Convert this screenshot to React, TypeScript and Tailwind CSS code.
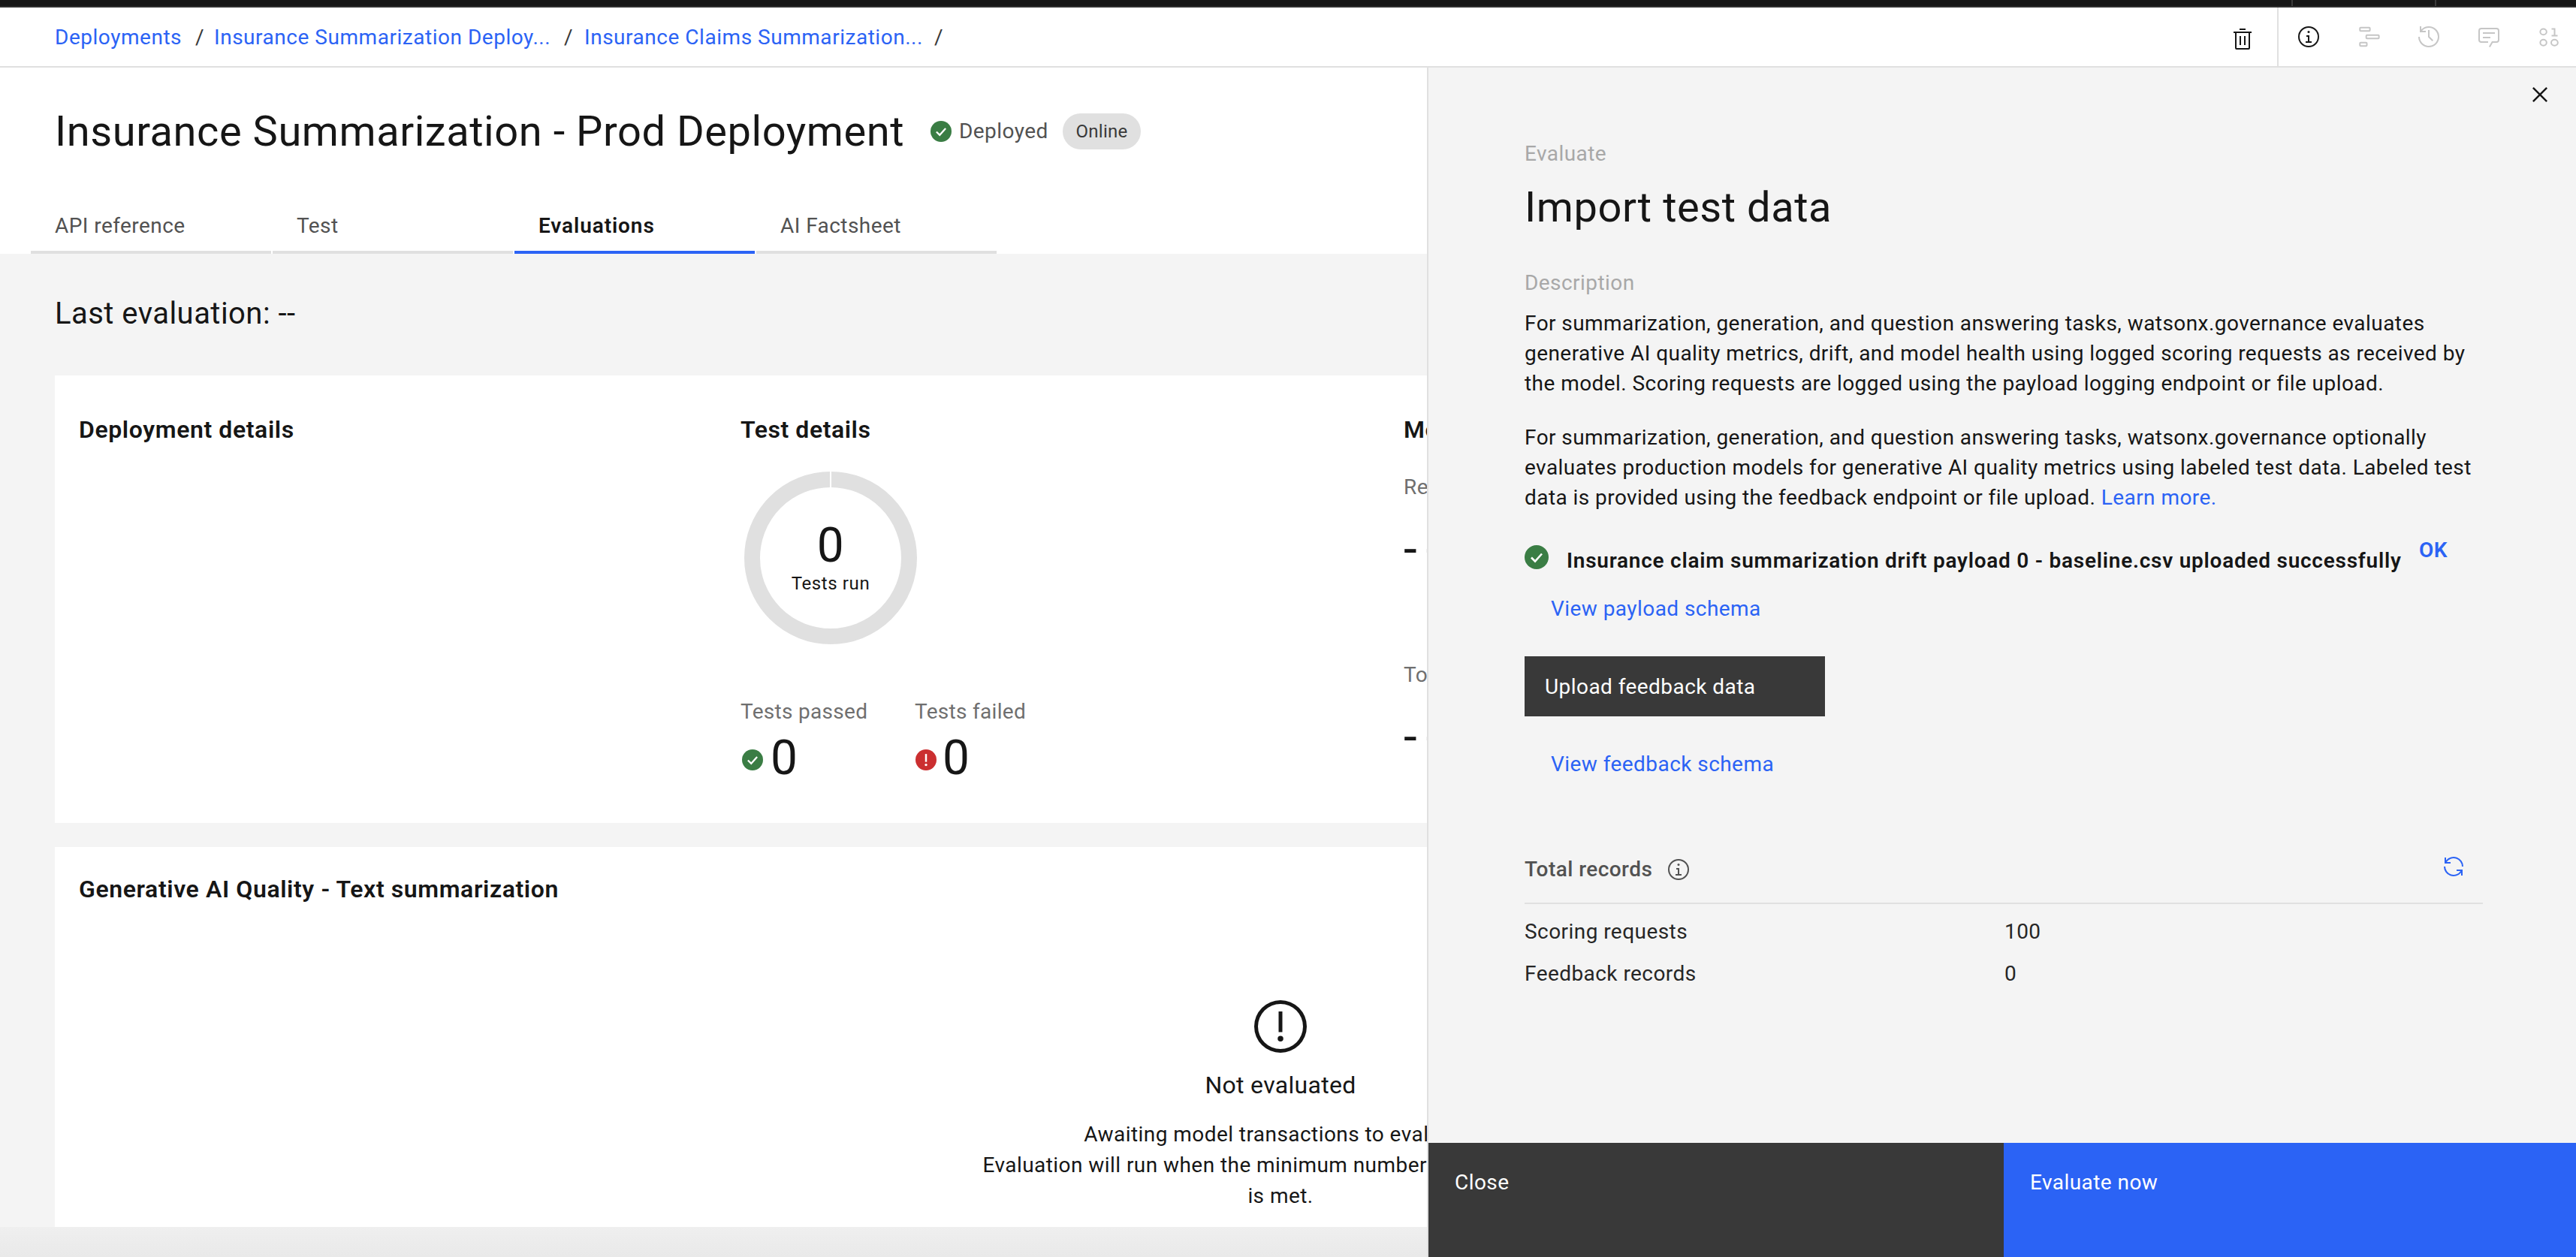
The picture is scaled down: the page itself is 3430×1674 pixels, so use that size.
import React from 'react';

const Icon = ({ className, children, size = 32 }: { className?: string; children: React.ReactNode; size?: number }) => (
  <svg width={size} height={size} viewBox="0 0 32 32" fill="currentColor" className={className}>
    {children}
  </svg>
);

const CheckFilled = ({ size, className }: { size: number; className?: string }) => (
  <svg width={size} height={size} viewBox="0 0 32 32" className={className}>
    <circle cx="16" cy="16" r="16" fill="#3a7d44" />
    <path d="M9 16.5l5 5 9-10" fill="none" stroke="#fff" strokeWidth="2.6" />
  </svg>
);

const WarnFilled = ({ size }: { size: number }) => (
  <svg width={size} height={size} viewBox="0 0 32 32">
    <circle cx="16" cy="16" r="16" fill="#cb2f30" />
    <rect x="14.6" y="7" width="2.8" height="12" fill="#fff" />
    <circle cx="16" cy="23.5" r="1.9" fill="#fff" />
  </svg>
);

const InfoIcon = ({ size = 32, className }: { size?: number; className?: string }) => (
  <Icon size={size} className={className}>
    <path d="M17 22v-8h-4v2h2v6h-3v2h8v-2h-3z" />
    <path d="M16 8a1.5 1.5 0 101.5 1.5A1.5 1.5 0 0016 8z" />
    <path d="M16 30a14 14 0 1114-14 14 14 0 01-14 14zm0-26a12 12 0 1012 12A12 12 0 0016 4z" />
  </Icon>
);

const CloseIcon = () => (
  <Icon size={40}>
    <path d="M24 9.4L22.6 8 16 14.6 9.4 8 8 9.4 14.6 16 8 22.6 9.4 24 16 17.4 22.6 24 24 22.6 17.4 16 24 9.4z" />
  </Icon>
);

const TopBar = () => (
  <div className="flex flex-col">
    <div className="flex h-2 bg-[#161616]">
      <div className="w-[3051px]" />
      <div className="w-[2px] bg-[#3a3a3a]" />
      <div className="w-[189px]" />
      <div className="w-[2px] bg-[#3a3a3a]" />
    </div>
    <div className="h-[2px] bg-[#2e2e2e]" />
    <div className="flex h-[80px] items-stretch border-b-2 border-[#e0e0e0] bg-white pl-[73px] pr-[20px]">
      <div className="flex flex-1 items-center whitespace-nowrap pt-[2px] text-[28px] leading-[40px] tracking-[0.53px] text-[#2b63f5]">
        <span className="w-[187px]">Deployments</span>
        <span className="w-[25px] text-[#393939]">/</span>
        <span className="w-[466px]">Insurance Summarization Deploy...</span>
        <span className="w-[27px] text-[#393939]">/</span>
        <span className="w-[466px]">Insurance Claims Summarization...</span>
        <span className="text-[#393939]">/</span>
      </div>
      <div className="flex items-center text-[#161616]">
        <Icon className="mt-[5px]">
          <path d="M12 12h2v12h-2zM18 12h2v12h-2z" />
          <path d="M4 6v2h2v20a2 2 0 002 2h16a2 2 0 002-2V8h2V6zm4 22V8h16v20zM12 2h8v2h-8z" />
        </Icon>
      </div>
      <div className="ml-[30px] mr-[24px] w-[2px] bg-[#e0e0e0]" />
      <div className="flex items-center gap-[48px] text-[#c6c6c6]">
        <InfoIcon className="text-[#161616]" />
        <Icon>
          <g fill="none" stroke="currentColor" strokeWidth="2">
            <rect x="4.3" y="3.7" width="13.3" height="4.6" rx="1" />
            <rect x="12.7" y="13.7" width="16.9" height="4.6" rx="1" />
            <rect x="4.3" y="23.7" width="9.2" height="4.6" rx="1" />
          </g>
        </Icon>
        <Icon>
          <path d="M20.59 22L15 16.41 15 7 17 7 17 15.58 22 20.59 20.59 22z" />
          <path d="M16 2A13.94 13.94 0 006 6.23V2H4v8h8V8H7.08A12 12 0 1 1 4 16H2A14 14 0 1 0 16 2z" />
        </Icon>
        <Icon>
          <path d="M17.74 30L16 29l4-7h6a2 2 0 002-2V8a2 2 0 00-2-2H6a2 2 0 00-2 2v12a2 2 0 002 2h9v2H6a4 4 0 01-4-4V8a4 4 0 014-4h20a4 4 0 014 4v12a4 4 0 01-4 4h-4.84z" />
          <path d="M8 10h16v2H8zM8 16h10v2H8z" />
        </Icon>
        <Icon>
          <g fill="none" stroke="currentColor" strokeWidth="2">
            <ellipse cx="8.6" cy="9.4" rx="4.2" ry="3.8" />
            <ellipse cx="8.6" cy="23.7" rx="4.2" ry="4" />
            <ellipse cx="23.4" cy="23.7" rx="4.4" ry="4" />
            <path d="M19.5 5.5h4v9M19.5 14.5h8" />
          </g>
        </Icon>
      </div>
    </div>
  </div>
);

const tabs = ['API reference', 'Test', 'Evaluations', 'AI Factsheet'];

const Evaluations = () => (
  <div className="w-[1900px] shrink-0 overflow-hidden">
    <div className="w-[3430px]">
      <div className="bg-white">
        <div className="mt-[57px] flex h-[56px] items-center pl-[73px]">
          <h1 className="w-[1166px] whitespace-nowrap text-[56px] font-normal leading-[56px] tracking-[0.55px]">Insurance Summarization - Prod Deployment</h1>
          <CheckFilled size={28} />
          <span className="ml-[10px] w-[138px] text-[28px] leading-[40px] text-[#525252]">Deployed</span>
          <span className="flex h-[48px] w-[104px] items-center justify-center rounded-full bg-[#e0e0e0] text-[24px] tracking-[0.3px] text-[#393939]">Online</span>
        </div>
        <div className="ml-[41px] mt-[55px] flex gap-[2px]">
          {tabs.map(t => (
            <div
              key={t}
              className={`h-[80px] w-[320px] border-b-4 pl-[32px] pt-[23px] text-[28px] leading-[40px] ${
                t === 'Evaluations' ? 'border-[#2b63f5] font-semibold tracking-[0.9px] text-[#161616]' : 'border-[#e0e0e0] text-[#525252]'
              }`}
            >
              {t}
            </div>
          ))}
        </div>
      </div>

      <div className="bg-[#f4f4f4] pl-[73px] pr-[93px]">
        <div className="pt-[56px] text-[40px] leading-[48px] tracking-[0.46px]">Last evaluation: --</div>

        <div className="mt-[58px] grid h-[596px] grid-cols-[881px_883px_1fr] bg-white pl-[32px] pt-[52px]">
          <h3 className="text-[32px] font-semibold leading-[40px] tracking-[0.6px]">Deployment details</h3>
          <div>
            <h3 className="text-[32px] font-semibold leading-[40px] tracking-[0.55px]">Test details</h3>
            <div className="relative ml-[5px] mt-[36px] h-[230px] w-[230px]">
              <svg width="230" height="230" viewBox="0 0 230 230">
                <circle cx="115" cy="115" r="104.5" fill="none" stroke="#e0e0e0" strokeWidth="21" />
                <rect x="114" y="0" width="2" height="22" fill="#fff" />
              </svg>
              <div className="absolute inset-x-0 top-[67px] flex flex-col items-center">
                <span className="text-[64px] leading-[64px]">0</span>
                <span className="mt-[2px] text-[24px] leading-[32px] tracking-[0.6px]">Tests run</span>
              </div>
            </div>
            <div className="mt-[70px] flex text-[28px] leading-[40px] tracking-[0.3px] text-[#6f6f6f]">
              <span className="w-[232px]">Tests passed</span>
              <span>Tests failed</span>
            </div>
            <div className="mt-[10px] flex text-[64px] leading-[64px]">
              <div className="flex w-[229px] items-center gap-[10px]">
                <span className="pl-[2px] pt-[4px]"><CheckFilled size={28} /></span>
                <span>0</span>
              </div>
              <div className="flex items-center gap-[8px]">
                <span className="pl-[4px] pt-[4px]"><WarnFilled size={28} /></span>
                <span>0</span>
              </div>
            </div>
          </div>
          <div>
            <h3 className="text-[32px] font-semibold leading-[40px]">Model health</h3>
            <div className="mt-[37px] text-[28px] leading-[40px] text-[#6f6f6f]">Records evaluated</div>
            <div className="mt-[31px] text-[64px] leading-[64px] tracking-[12px]">--</div>
            <div className="mt-[115px] text-[28px] leading-[40px] text-[#6f6f6f]">Total records</div>
            <div className="mt-[31px] text-[64px] leading-[64px] tracking-[12px]">--</div>
          </div>
        </div>

        <div className="mt-[32px] flex h-[506px] flex-col bg-white px-[32px] pt-[36px]">
          <h3 className="text-[32px] font-semibold leading-[40px] tracking-[0.6px]">Generative AI Quality - Text summarization</h3>
          <div className="mt-[123px] flex flex-col items-center">
            <Icon size={80}>
              <path d="M16 2a14 14 0 1014 14A14 14 0 0016 2zm0 26a12 12 0 1112-12 12 12 0 01-12 12z" />
              <rect x="15" y="8" width="2" height="11" />
              <circle cx="16" cy="22.5" r="1.5" />
            </Icon>
            <div className="mt-[18px] text-[32px] leading-[40px] tracking-[0.3px]">Not evaluated</div>
            <p className="mt-[25px] w-[820px] text-center text-[28px] leading-[41px]">
              Awaiting model transactions to evaluate.
              <br />
              Evaluation will run when the minimum number of transactions
              <br />
              is met.
            </p>
          </div>
        </div>

        <div className="-ml-[73px] -mr-[93px] h-[40px] bg-linear-to-b from-[#efefef] to-[#e9e9e9]" />
      </div>
    </div>
  </div>
);

const ImportPanel = () => (
  <div className="relative flex min-w-0 flex-1 flex-col border-l-2 border-[#e0e0e0] bg-[#f4f4f4]">
    <button className="absolute right-[28px] top-[16px] text-[#161616]">
      <CloseIcon />
    </button>
    <div className="flex-1 pl-[128px] pr-[124px] pt-[95px] text-[28px] leading-[40px]">
      <div className="text-[#a8a8a8]">Evaluate</div>
      <h2 className="mt-[19px] text-[56px] font-normal leading-[64px] tracking-[0.55px]">Import test data</h2>
      <div className="mt-[49px] text-[#a8a8a8]">Description</div>
      <p className="mt-[14px]">
        For summarization, generation, and question answering tasks, watsonx.governance evaluates generative AI quality metrics, drift, and model health using logged scoring requests as received by the model. Scoring requests are logged using the payload logging endpoint or file upload.
      </p>
      <p className="mt-[32px]">
        For summarization, generation, and question answering tasks, watsonx.governance optionally evaluates production models for generative AI quality metrics using labeled test data. Labeled test data is provided using the feedback endpoint or file upload. <span className="text-[#2b63f5]">Learn more.</span>
      </p>

      <div className="mt-[30px] flex items-start">
        <CheckFilled size={32} className="mt-[13px]" />
        <span className="ml-[24px] mt-[14px] w-[1111px] whitespace-nowrap font-semibold tracking-[0.75px]">
          Insurance claim summarization drift payload 0 - baseline.csv uploaded successfully
        </span>
        <span className="ml-[24px] font-semibold text-[#2b63f5]">OK</span>
      </div>
      <div className="ml-[35px] mt-[24px] text-[#2b63f5]">View payload schema</div>
      <button className="mt-[43px] block h-[80px] w-[400px] bg-[#393939] pl-[27px] pt-[2px] text-left text-white">Upload feedback data</button>
      <div className="ml-[35px] mt-[44px] text-[#2b63f5]">View feedback schema</div>

      <div className="mt-[100px] flex items-start justify-between border-b-2 border-[#e0e0e0] pb-[24px]">
        <div className="flex items-center gap-[19px] font-medium text-[#525252]">
          <span>Total records</span>
          <InfoIcon size={32} />
        </div>
        <Icon className="mr-[23px] text-[#2b63f5]">
          <path d="M12 10H6.78A11 11 0 0127 16h2A13 13 0 006 7.68V4H4v8h8zM20 22h5.22A11 11 0 015 16H3a13 13 0 0023 8.32V28h2v-8h-8z" />
        </Icon>
      </div>
      <div className="mt-[17px] grid grid-cols-[639px_1fr] gap-y-[16px] text-[#262626]">
        <span>Scoring requests</span>
        <span>100</span>
        <span>Feedback records</span>
        <span>0</span>
      </div>
    </div>
    <div className="flex h-[152px] text-[28px] leading-[40px] text-white">
      <div className="w-[766px] bg-[#393939] pl-[35px] pt-[33px]">Close</div>
      <div className="flex-1 bg-[#2b63f5] pl-[35px] pt-[33px]">Evaluate now</div>
    </div>
  </div>
);

export default function App() {
  return (
    <div className="flex h-[1674px] w-[3430px] flex-col overflow-hidden bg-white tracking-[0.44px] text-[#161616] [font-family:Roboto,'Noto_Sans',sans-serif]">
      <TopBar />
      <div className="flex min-h-0 flex-1">
        <Evaluations />
        <ImportPanel />
      </div>
    </div>
  );
}
